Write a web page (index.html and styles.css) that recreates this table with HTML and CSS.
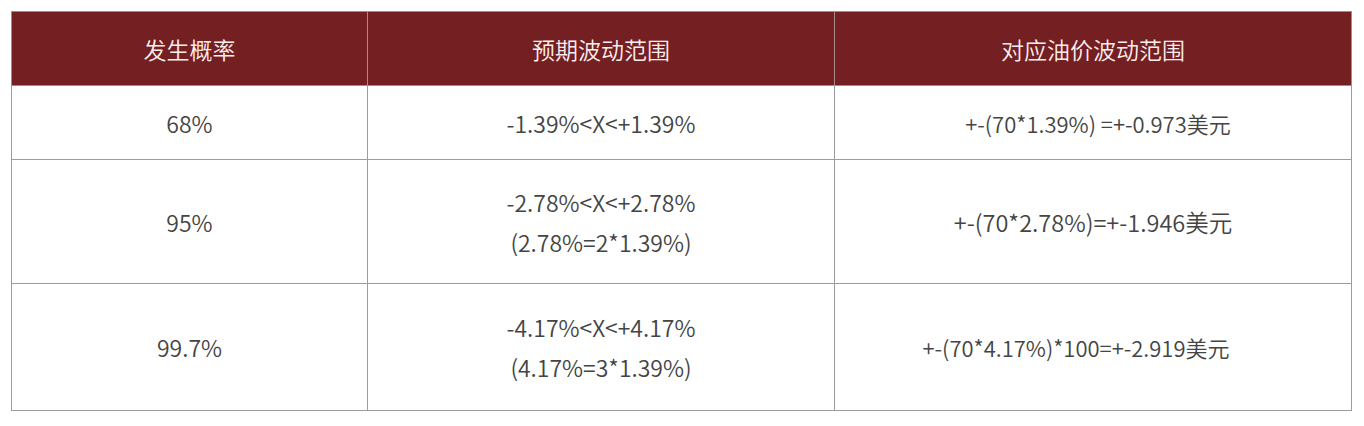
FILE: index.html
```html
<!DOCTYPE html>
<html lang="zh-CN">
<head>
<meta charset="utf-8">
<title>油价波动范围</title>
<link rel="stylesheet" href="styles.css">
</head>
<body>
<table class="vol-table">
  <colgroup>
    <col class="c1">
    <col class="c2">
    <col class="c3">
  </colgroup>
  <thead>
    <tr class="head-row">
      <th>发生概率</th>
      <th>预期波动范围</th>
      <th>对应油价波动范围</th>
    </tr>
  </thead>
  <tbody>
    <tr class="row-1">
      <td>68%</td>
      <td>-1.39%&lt;X&lt;+1.39%</td>
      <td class="price"><span class="shift-r">+-(70*1.39%)&nbsp;=+-0.973美元</span></td>
    </tr>
    <tr class="row-2">
      <td>95%</td>
      <td>-2.78%&lt;X&lt;+2.78%<br>(2.78%=2*1.39%)</td>
      <td class="price price-lg">+-(70*2.78%)=+-1.946美元</td>
    </tr>
    <tr class="row-3">
      <td>99.7%</td>
      <td>-4.17%&lt;X&lt;+4.17%<br>(4.17%=3*1.39%)</td>
      <td class="price"><span class="shift-l">+-(70*4.17%)*100=+-2.919美元</span></td>
    </tr>
  </tbody>
</table>
</body>
</html>
```

FILE: styles.css
```css
html, body {
  margin: 0;
  padding: 0;
  background: #ffffff;
}

body {
  padding: 11px 14px 0 11px;
  font-family: "Noto Sans CJK SC", "Noto Sans", sans-serif;
}

.vol-table {
  border-collapse: collapse;
  width: 1340px;
  table-layout: fixed;
  font-size: 23px;
  color: #444444;
}

.c1 { width: 356px; }
.c2 { width: 467px; }
.c3 { width: 517px; }

.vol-table th,
.vol-table td {
  border: 1px solid #9c9c9c;
  text-align: center;
  vertical-align: middle;
  padding: 0;
  font-weight: 350;
  line-height: 40px;
}

.vol-table th {
  background: #741f21;
  color: #fbeeee;
  border-color: #a98a8c;
  height: 73px;
}

.head-row th + th {
  border-left-color: #741f21;
}

.row-1 td { height: 73px; }
.row-2 td { height: 123px; }
.row-3 td { height: 126px; }

.vol-table td.price {
  font-size: 22px;
}

.vol-table td.price-lg {
  font-size: 23.5px;
}

.shift-r { padding-left: 10px; }
.shift-l { padding-right: 34px; }
```
